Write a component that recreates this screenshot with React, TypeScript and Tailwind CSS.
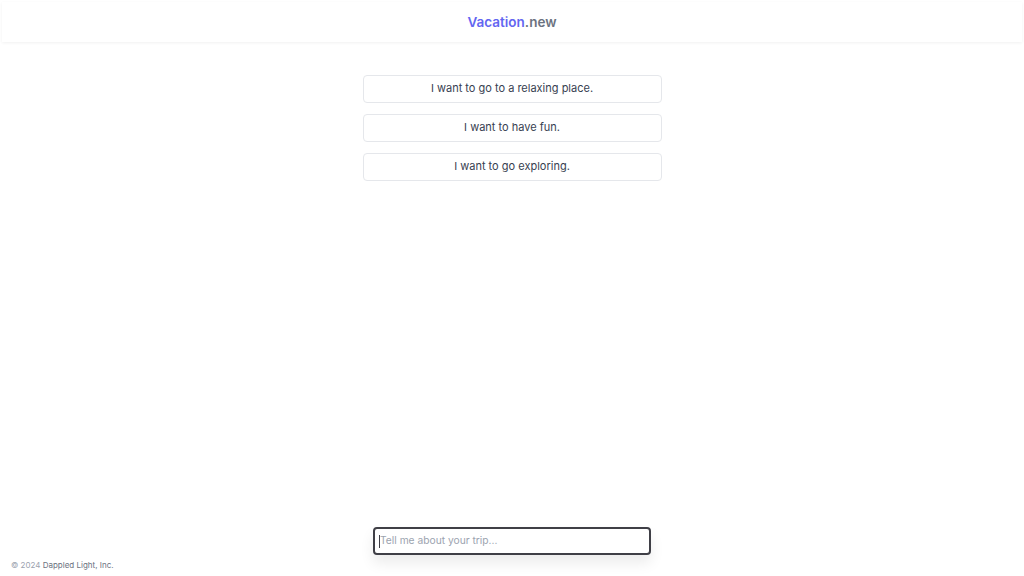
import React from "react";

export default function App() {
  const options = [
    "I want to go to a relaxing place.",
    "I want to have fun.",
    "I want to go exploring.",
  ];
  return (
    <div
      className="relative flex h-screen w-full flex-col bg-white"
      style={{ fontFamily: "Inter, 'Liberation Sans', sans-serif" }}
    >
      <header className="mx-[2px] mt-[2px] flex h-[40px] shrink-0 items-center justify-center bg-white shadow-[0_1px_3px_rgba(0,0,0,0.06)]">
        <div className="text-[13.5px] font-semibold">
          <span className="text-[#6366f1]">Vacation</span>
          <span className="text-[#6b7280]">.new</span>
        </div>
      </header>

      <main className="flex flex-1 flex-col items-center pt-[33px]">
        <div className="flex w-[299px] flex-col gap-[11px]">
          {options.map((o) => (
            <button
              key={o}
              className="flex h-[28px] w-full items-center justify-center rounded-[4px] border border-[#e5e7eb] bg-white pb-px text-[11px] text-[#374151]"
            >
              {o}
            </button>
          ))}
        </div>
      </main>

      <div className="flex shrink-0 justify-center pb-[21px]">
        <div className="flex h-[28px] w-[278px] items-center rounded-[4px] border-2 border-[#3f3f46] bg-white pl-[4px] shadow-[0_8px_14px_rgba(0,0,0,0.08)]">
          <span className="h-[13px] w-px bg-[#3f3f46]" />
          <span className="text-[10.25px] text-[#9ca3af]">Tell me about your trip...</span>
        </div>
      </div>

      <footer className="absolute bottom-[5px] left-[11px] text-[8px]">
        <span className="text-[#9ca3af]">© 2024 </span>
        <span className="text-[#6b7280]">Dappled Light, Inc.</span>
      </footer>
    </div>
  );
}
